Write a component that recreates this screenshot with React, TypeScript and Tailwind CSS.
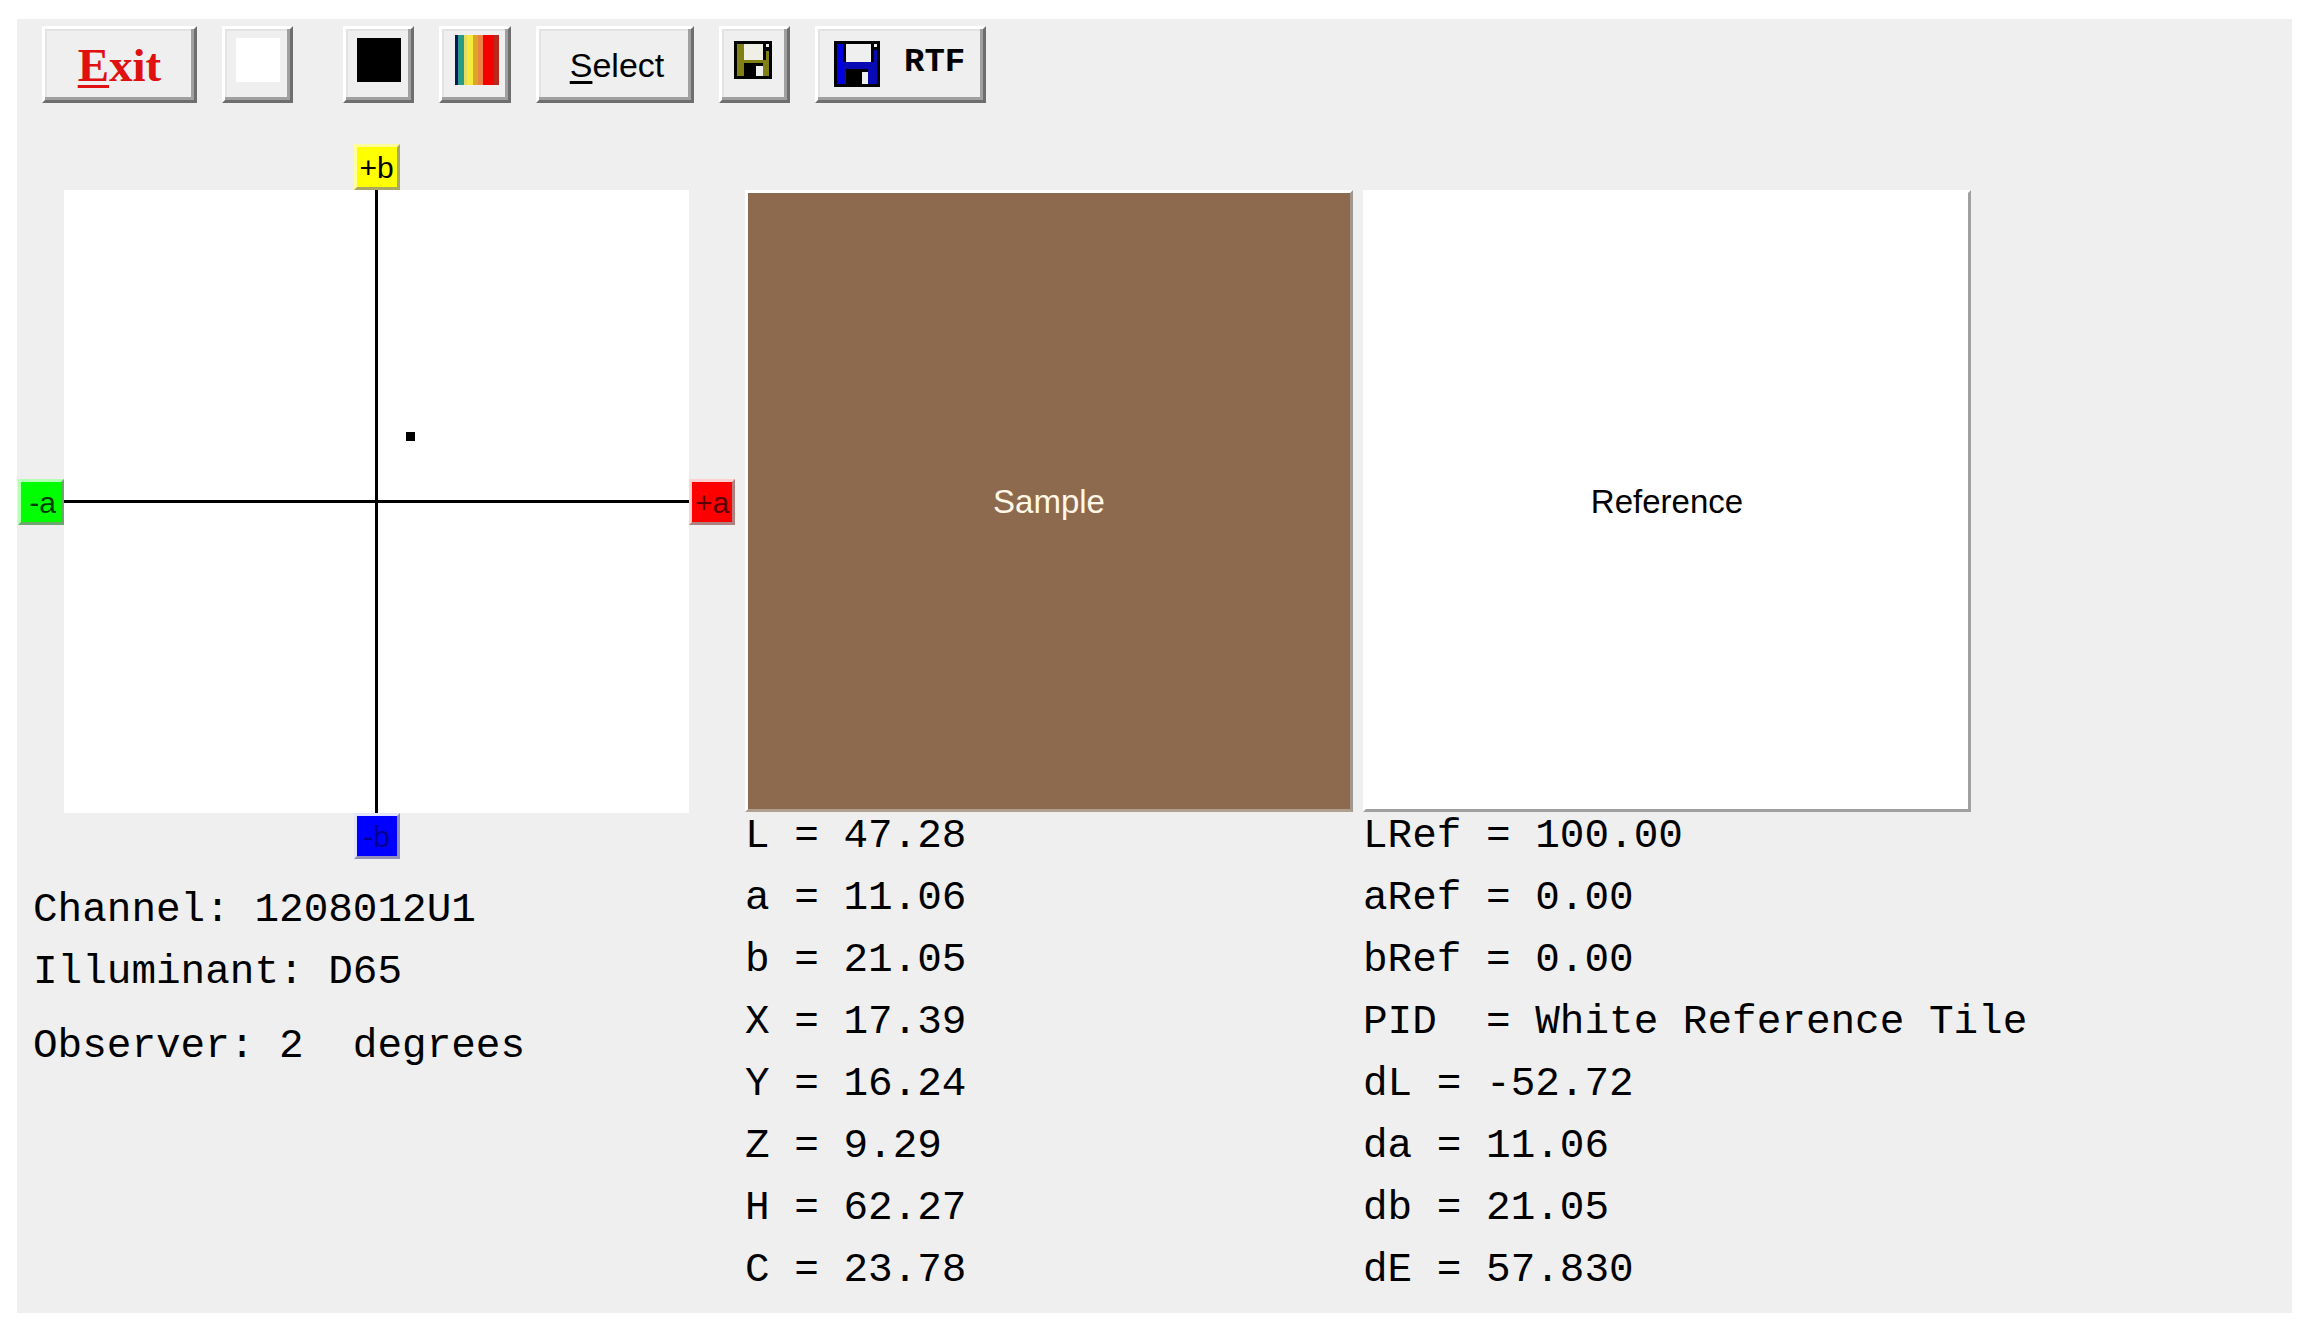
import React from "react";

const bevel =
  "flex h-[77px] border-3 border-t-white border-l-white border-r-[#6e6e6e] border-b-[#6e6e6e] bg-[#efefef] shadow-[inset_-3px_-3px_0_#a0a0a0,inset_2px_2px_0_#e3e3e3]";

const mono = "font-['Liberation_Mono',monospace] text-[41px] leading-[62px] whitespace-pre text-black";

const swatch =
  "mb-[-7px] flex h-[622px] items-center justify-center border-3 border-t-white border-l-white pt-0.5 font-['Liberation_Sans',sans-serif] text-[33px]";

const sample = [
  ["L", "47.28"],
  ["a", "11.06"],
  ["b", "21.05"],
  ["X", "17.39"],
  ["Y", "16.24"],
  ["Z", "9.29"],
  ["H", "62.27"],
  ["C", "23.78"],
];

const reference = [
  ["LRef", "100.00"],
  ["aRef", "0.00"],
  ["bRef", "0.00"],
  ["PID ", "White Reference Tile"],
  ["dL", "-52.72"],
  ["da", "11.06"],
  ["db", "21.05"],
  ["dE", "57.830"],
];

const stripes: [string, number, number][] = [
  ["#001a5e", 0, 3],
  ["#2a9a86", 3, 6],
  ["#e3dc60", 9, 3],
  ["#f6ea3c", 12, 6],
  ["#d9a62a", 18, 5],
  ["#ee8242", 23, 5],
  ["#f50000", 28, 11],
  ["#b52a1c", 39, 5],
];

function Rainbow() {
  return (
    <svg width="44" height="50" viewBox="0 0 44 50" shapeRendering="crispEdges" aria-hidden="true">
      {stripes.map(([c, x, w]) => (
        <rect key={x} x={x} y="0" width={w} height="50" fill={c} />
      ))}
    </svg>
  );
}

function SmallDisk() {
  return (
    <svg width="38" height="38" viewBox="0 0 12 12" preserveAspectRatio="none" shapeRendering="crispEdges" aria-hidden="true">
      <rect width="12" height="12" fill="#000" />
      <rect x="1" y="1" width="10" height="10" fill="#808014" />
      <rect x="3" y="1" width="6" height="5" fill="#efefe6" />
      <rect x="9" y="0" width="1" height="6" fill="#000" />
      <rect x="10" y="1" width="1" height="1" fill="#efefe6" />
      <rect x="10" y="2" width="1" height="1" fill="#000" />
      <rect x="3" y="7" width="6" height="4" fill="#000" />
      <rect x="7" y="8" width="2" height="3" fill="#efefef" />
    </svg>
  );
}

function BigDisk() {
  return (
    <svg width="46" height="46" viewBox="0 0 15 15" preserveAspectRatio="none" shapeRendering="crispEdges" aria-hidden="true">
      <rect width="15" height="15" fill="#000" />
      <rect x="1" y="1" width="13" height="13" fill="#0a0ab4" />
      <rect x="1" y="1" width="2" height="13" fill="#0000e0" />
      <rect x="4" y="1" width="8" height="6" fill="#efefef" />
      <rect x="3" y="1" width="1" height="6" fill="#000" />
      <rect x="12" y="1" width="1" height="6" fill="#000" />
      <rect x="13" y="1" width="1" height="1" fill="#efefef" />
      <rect x="13" y="2" width="1" height="1" fill="#000" />
      <rect x="4" y="9" width="7" height="5" fill="#000" />
      <rect x="9" y="10" width="2" height="4" fill="#efefef" />
    </svg>
  );
}

function Readings({ rows }: { rows: string[][] }) {
  return (
    <dl className={mono}>
      {rows.map(([k, v]) => (
        <div key={k} className="flex">
          <dt>{k} = </dt>
          <dd>{v}</dd>
        </div>
      ))}
    </dl>
  );
}

const axis =
  "flex size-[46px] items-center justify-center border-3 pt-0.5 font-['Liberation_Sans',sans-serif] text-[30px] leading-none";

export default function App() {
  return (
    <div className="bg-white pt-[19px] pr-6 pb-5 pl-[17px]">
      <main className="bg-[#efefef] pb-3">
        <div className="flex pt-[7px] pl-[25px]">
          <button className={`${bevel} mr-[25px] w-[155px] items-center justify-center pt-0.5 font-['Liberation_Serif',serif] text-[47px] leading-none font-bold text-[#e01010]`}>
            <span>
              <span className="underline decoration-3 underline-offset-4">E</span>xit
            </span>
          </button>
          <button aria-label="White" className={`${bevel} mr-[50px] w-[71px] justify-center pt-[9px]`}>
            <span className="size-[44px] bg-white" />
          </button>
          <button aria-label="Black" className={`${bevel} mr-[25px] w-[71px] justify-center pt-[9px]`}>
            <span className="size-[44px] bg-black" />
          </button>
          <button aria-label="Spectrum" className={`${bevel} mr-[25px] w-[72px] pt-[6px] pl-[13px]`}>
            <Rainbow />
          </button>
          <button className={`${bevel} mr-[25px] w-[158px] items-center justify-center pl-1 font-['Liberation_Sans',sans-serif] text-[34px] leading-none`}>
            <span>
              <span className="underline decoration-3 underline-offset-4">S</span>elect
            </span>
          </button>
          <button aria-label="Save" className={`${bevel} mr-[25px] w-[71px] pt-3 pl-3`}>
            <SmallDisk />
          </button>
          <button className={`${bevel} w-[171px] gap-6 pt-3 pl-4 font-['Liberation_Mono',monospace] text-[34px] leading-[42px] font-bold`}>
            <BigDisk />
            <span>RTF</span>
          </button>
        </div>

        <div className="mt-10 flex">
          <section className="w-[728px]">
            <div className="grid grid-cols-[47px_625px_46px] grid-rows-[47px_623px_46px] items-center justify-items-center">
              <div className={`${axis} col-start-2 border-t-[#ffff9c] border-l-[#ffff9c] border-r-[#a8a864] border-b-[#a8a864] bg-[#ffff00]`}>+b</div>
              <div className={`${axis} col-start-1 row-start-2 border-t-[#b4ffb4] border-l-[#b4ffb4] border-r-[#6ca86c] border-b-[#6ca86c] bg-[#00ff00] pl-1 text-[#003c00]`}>-a</div>
              <svg className="row-start-2" width="625" height="623" viewBox="0 0 625 623" shapeRendering="crispEdges" role="img" aria-label="a/b colour plane">
                <rect width="625" height="623" fill="#fff" />
                <rect x="311" width="3" height="623" fill="#000" />
                <rect y="310" width="625" height="3" fill="#000" />
                <rect x="342" y="242" width="9" height="9" fill="#000" />
              </svg>
              <div className={`${axis} col-start-3 row-start-2 border-t-[#ffd0d0] border-l-[#ffd0d0] border-r-[#b08080] border-b-[#b08080] bg-[#ff0000] text-[#5a0000]`}>+a</div>
              <div className={`${axis} col-start-2 row-start-3 border-t-[#e4e4fa] border-l-[#e4e4fa] border-r-[#9090b8] border-b-[#9090b8] bg-[#0000ff] text-[#00008c]`}>-b</div>
            </div>
            <div className={`${mono} mt-5 pl-4`}>
              <p>Channel: 1208012U1</p>
              <p>Illuminant: D65</p>
              <p className="mt-3">Observer: 2  degrees</p>
            </div>
          </section>

          <section className="mr-[10px] w-[608px] pt-[47px]">
            <div className={`${swatch} border-r-[#a09890] border-b-[#b0a090] bg-[#8d694e] text-[#fff8e6]`}>
              Sample
            </div>
            <Readings rows={sample} />
          </section>

          <section className="w-[608px] pt-[47px]">
            <div className={`${swatch} border-r-[#a0a0a0] border-b-[#a0a0a0] bg-white text-black`}>
              Reference
            </div>
            <Readings rows={reference} />
          </section>
        </div>
      </main>
    </div>
  );
}
